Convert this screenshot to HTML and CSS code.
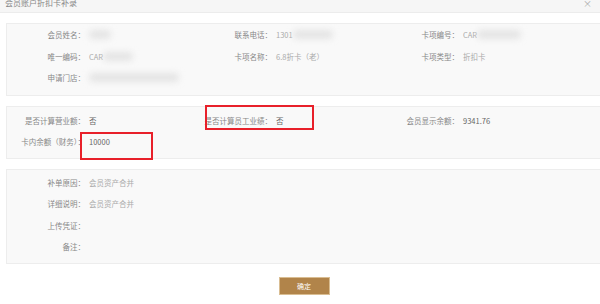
FILE: index.html
```html
<!DOCTYPE html>
<html lang="zh-CN">
<head>
  <meta charset="UTF-8" />
  <title>会员账户折扣卡补录</title>
  <link rel="stylesheet" href="styles.css">
</head>
<body>
  <div class="dialog">
    <div class="dialog-head">
      <span class="dialog-title">会员账户折扣卡补录</span>
      <span class="dialog-close">×</span>
    </div>

    <!-- 会员信息 -->
    <div class="panel panel-info">
      <div class="grid">
        <div class="field"><span class="label">会员姓名：</span><span class="value"><i class="mask" style="width:22px"></i></span></div>
        <div class="field"><span class="label">联系电话：</span><span class="value">1301<i class="mask" style="width:40px"></i></span></div>
        <div class="field"><span class="label">卡项编号：</span><span class="value">CAR<i class="mask" style="width:44px"></i></span></div>

        <div class="field"><span class="label">唯一编码：</span><span class="value">CAR<i class="mask" style="width:30px"></i></span></div>
        <div class="field"><span class="label">卡项名称：</span><span class="value">6.8折卡（老）</span></div>
        <div class="field"><span class="label">卡项类型：</span><span class="value">折扣卡</span></div>

        <div class="field"><span class="label">申请门店：</span><span class="value"><i class="mask" style="width:90px"></i></span></div>
      </div>
    </div>

    <!-- 业绩信息 -->
    <div class="panel panel-perf">
      <div class="grid">
        <div class="field"><span class="label">是否计算营业额：</span><span class="value dark">否</span></div>
        <div class="field"><span class="label">是否计算员工业绩：</span><span class="value dark">否</span></div>
        <div class="field"><span class="label">会员显示余额：</span><span class="value dark">9341.76</span></div>

        <div class="field"><span class="label">卡内余额（财务）：</span><span class="value dark">10000</span></div>
      </div>
      <div class="mark mark-staff"></div>
      <div class="mark mark-balance"></div>
    </div>

    <!-- 补单说明 -->
    <div class="panel panel-note">
      <div class="field"><span class="label">补单原因：</span><span class="value">会员资产合并</span></div>
      <div class="field"><span class="label">详细说明：</span><span class="value">会员资产合并</span></div>
      <div class="field"><span class="label">上传凭证：</span><span class="value"></span></div>
      <div class="field"><span class="label">备注：</span><span class="value"></span></div>
    </div>

    <div class="dialog-foot">
      <button class="btn-ok">确定</button>
    </div>
  </div>
</body>
</html>
```

FILE: styles.css
```css
body {
  margin: 0;
  background-color: #fff;
  font-family: "Noto Sans CJK SC", "Liberation Sans", sans-serif;
  font-size: 7.5px;
  color: #888;
  overflow: hidden;
}

.dialog {
  width: 600px;
}

.dialog-head {
  height: 12px;
  background-color: #f6f6f6;
  border-bottom: 1px solid #ececec;
  display: flex;
  justify-content: space-between;
  overflow: hidden;
}

.dialog-title {
  padding-left: 5px;
  font-size: 8px;
  line-height: 8px;
  margin-top: -1px;
  color: #888;
}

.dialog-close {
  padding-right: 8px;
  font-size: 9px;
  line-height: 8px;
  color: #aaa;
}

.panel {
  position: relative;
  margin: 0 -10px 0 6px;
  background-color: #f9f9f9;
  border: 1px solid #ededed;
}

.panel-info {
  margin-top: 10px;
  padding: 0 0 6px;
}

.panel-perf {
  margin-top: 10px;
  padding: 3px 0 5px;
}

.panel-note {
  margin-top: 10px;
  padding: 2px 0 5px;
}

.grid {
  display: grid;
  grid-template-columns: 187px 187px 187px;
}

.field {
  display: flex;
  align-items: center;
  height: 21.5px;
  white-space: nowrap;
}

.label {
  width: 78px;
  text-align: right;
  color: #888;
}

.value {
  margin-left: 4px;
  color: #aaa;
  display: flex;
  align-items: center;
}

.value.dark {
  color: #666;
}

.mask {
  display: inline-block;
  height: 9px;
  background-color: #e4e4e4;
  border-radius: 5px;
  filter: blur(3px);
}

/* 红框标注 */
.mark {
  position: absolute;
  border: 2px solid #e8202a;
  box-sizing: border-box;
}

.mark-staff {
  left: 198px;
  top: -2px;
  width: 109px;
  height: 25px;
}

.mark-balance {
  left: 73px;
  top: 25px;
  width: 73px;
  height: 28px;
}

.dialog-foot {
  display: flex;
  justify-content: center;
  padding-top: 13px;
}

.btn-ok {
  width: 51px;
  height: 18px;
  margin-left: 8px;
  padding: 0;
  border: 1px solid #d9bd92;
  background-color: #b1844a;
  color: #fff;
  font-family: inherit;
  font-size: 7px;
  cursor: pointer;
}
```
